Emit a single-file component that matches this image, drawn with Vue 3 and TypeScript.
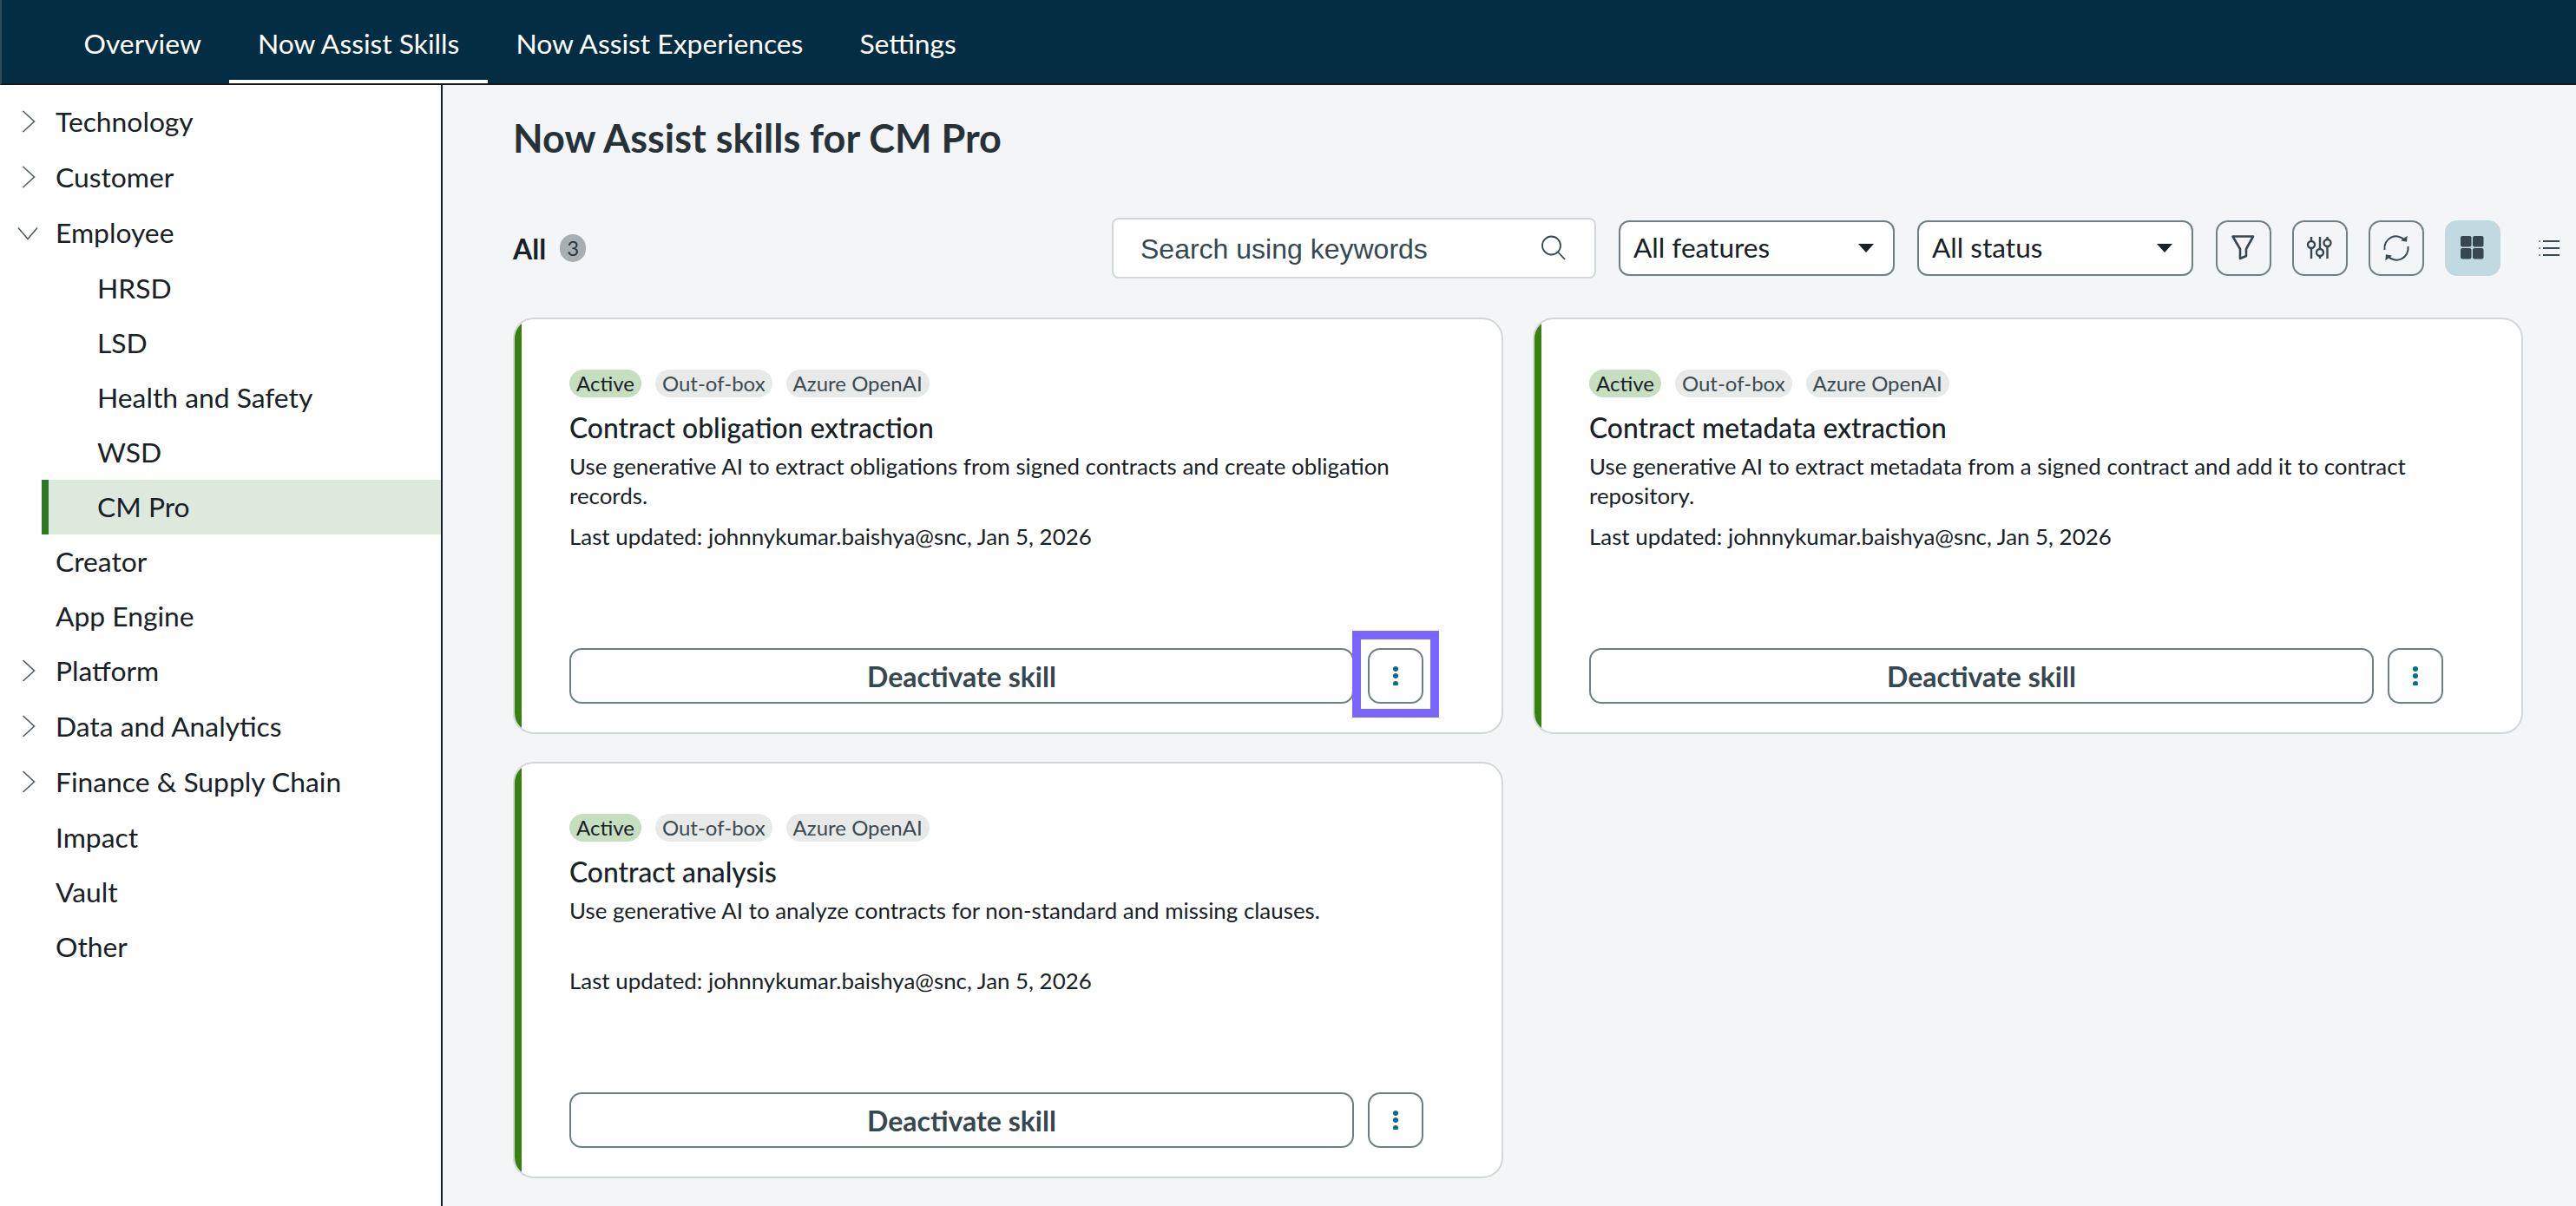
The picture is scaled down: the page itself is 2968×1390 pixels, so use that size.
<script setup lang="ts">
interface NavItem {
  label: string;
  chevron?: 'right' | 'down';
  sub?: boolean;
  active?: boolean;
}

interface Skill {
  title: string;
  desc: string;
  focused?: boolean;
}

const tabs = ['Overview', 'Now Assist Skills', 'Now Assist Experiences', 'Settings'];

const navItems: NavItem[] = [
  { label: 'Technology', chevron: 'right' },
  { label: 'Customer', chevron: 'right' },
  { label: 'Employee', chevron: 'down' },
  { label: 'HRSD', sub: true },
  { label: 'LSD', sub: true },
  { label: 'Health and Safety', sub: true },
  { label: 'WSD', sub: true },
  { label: 'CM Pro', sub: true, active: true },
  { label: 'Creator' },
  { label: 'App Engine' },
  { label: 'Platform', chevron: 'right' },
  { label: 'Data and Analytics', chevron: 'right' },
  { label: 'Finance & Supply Chain', chevron: 'right' },
  { label: 'Impact' },
  { label: 'Vault' },
  { label: 'Other' },
];

const skills: Skill[] = [
  {
    title: 'Contract obligation extraction',
    desc: 'Use generative AI to extract obligations from signed contracts and create obligation records.',
    focused: true,
  },
  {
    title: 'Contract metadata extraction',
    desc: 'Use generative AI to extract metadata from a signed contract and add it to contract repository.',
  },
  {
    title: 'Contract analysis',
    desc: 'Use generative AI to analyze contracts for non-standard and missing clauses.',
  },
];
</script>

<template>
  <div class="page">
    <header class="topbar">
      <div
        v-for="(tab, i) in tabs"
        :key="tab"
        class="tab"
        :class="{ 'tab-active': i === 1 }"
      >
        {{ tab }}
      </div>
    </header>

    <div class="layout">
      <aside class="sidebar">
        <div
          v-for="item in navItems"
          :key="item.label"
          class="nav-row"
          :class="{ 'nav-sub': item.sub, 'nav-active': item.active, 'nav-tall': item.chevron }"
        >
          <span v-if="!item.sub" class="nav-icon">
            <svg v-if="item.chevron === 'right'" width="24" height="26" viewBox="0 0 24 26" fill="none" stroke="#4f5d63" stroke-width="1.6">
              <path d="M6.5 1 L19.5 13 L6.5 25" />
            </svg>
            <svg v-else-if="item.chevron === 'down'" width="24" height="26" viewBox="0 0 24 26" fill="none" stroke="#4f5d63" stroke-width="1.6">
              <path d="M1 7.5 L12 20.5 L23 7.5" />
            </svg>
          </span>
          <span>{{ item.label }}</span>
        </div>
      </aside>

      <main class="content">
        <h1 class="page-title">Now Assist skills for CM Pro</h1>

        <div class="toolbar">
          <div class="all-label">
            <span class="all-text">All</span>
            <span class="all-count">3</span>
          </div>

          <div class="search">
            <span class="search-text">Search using keywords</span>
            <svg width="30" height="30" viewBox="0 0 30 30" fill="none" stroke="#37474f" stroke-width="1.8">
              <circle cx="12.5" cy="12" r="10.5" />
              <path d="M20 19.5 L28 28" />
            </svg>
          </div>

          <div class="dropdown">
            <span class="dropdown-text">All features</span>
            <i class="caret"></i>
          </div>
          <div class="dropdown">
            <span class="dropdown-text">All status</span>
            <i class="caret"></i>
          </div>

          <button class="icon-btn">
            <svg width="64" height="64" viewBox="0 0 64 64" fill="none" stroke="#37474f" stroke-width="2.6" stroke-linejoin="round">
              <path d="M19.5 18.5 H43 L35 33 V41 L28 44 V33 Z" />
            </svg>
          </button>
          <button class="icon-btn">
            <svg width="64" height="64" viewBox="0 0 64 64" fill="none" stroke="#37474f" stroke-width="2.4">
              <path d="M22 19 V24 M22 32 V44 M32 19 V33 M32 41 V44 M40.5 19 V22 M40.5 30 V44" />
              <circle cx="22" cy="28" r="4" />
              <circle cx="32" cy="37" r="4" />
              <circle cx="40.5" cy="26" r="4" />
            </svg>
          </button>
          <button class="icon-btn">
            <svg width="64" height="64" viewBox="0 0 64 64" fill="none" stroke="#37474f" stroke-width="2">
              <path d="M18.5 34 A13.5 13.5 0 0 1 42 23" />
              <path d="M45.5 30 A13.5 13.5 0 0 1 22 41" />
              <path d="M44 19 L43.5 24 L38.5 23 Z" fill="#37474f" stroke-width="1.2" />
              <path d="M20 45 L20.5 40 L25.5 41 Z" fill="#37474f" stroke-width="1.2" />
            </svg>
          </button>
          <button class="icon-btn icon-btn-on">
            <svg width="64" height="64" viewBox="0 0 64 64" fill="#37474f">
              <rect x="18" y="18" width="12.5" height="12.5" rx="2" />
              <rect x="32" y="18" width="12.5" height="12.5" rx="2" />
              <rect x="18" y="32" width="12.5" height="12.5" rx="2" />
              <rect x="32" y="32" width="12.5" height="12.5" rx="2" />
            </svg>
          </button>
          <span class="list-icon">
            <svg width="24" height="18" viewBox="0 0 24 18" fill="none" stroke="#37474f" stroke-width="2">
              <path d="M5 1 H24 M5 9 H24 M5 17 H24" />
              <path d="M0 1 H2 M0 9 H2 M0 17 H2" stroke="#8a979b" />
            </svg>
          </span>
        </div>

        <div class="card-grid">
          <article v-for="skill in skills" :key="skill.title" class="card">
            <div class="card-bar"></div>
            <div class="card-body">
              <div class="tags">
                <span class="tag tag-green">Active</span>
                <span class="tag">Out-of-box</span>
                <span class="tag">Azure OpenAI</span>
              </div>
              <h2 class="card-title">{{ skill.title }}</h2>
              <p class="card-desc">{{ skill.desc }}</p>
              <p class="card-meta">Last updated: johnnykumar.baishya@snc, Jan 5, 2026</p>
              <div class="card-actions">
                <button class="deactivate">Deactivate skill</button>
                <button class="more">
                  <svg width="6" height="22" viewBox="0 0 6 22" fill="#066e8c">
                    <circle cx="3" cy="3" r="3" />
                    <circle cx="3" cy="11" r="3" />
                    <circle cx="3" cy="20" r="3" />
                  </svg>
                  <span v-if="skill.focused" class="focus-box"></span>
                </button>
              </div>
            </div>
          </article>
        </div>
      </main>
    </div>
  </div>
</template>

<style>
html,
body {
  margin: 0;
  background: #f4f5f7;
}
</style>

<style scoped>
.page {
  width: 2968px;
  height: 1390px;
  overflow: hidden;
  display: flex;
  flex-direction: column;
  font-family: Lato, "Liberation Sans", sans-serif;
  color: #172126;
  background: #f4f5f7;
}

.topbar {
  height: 96px;
  flex-shrink: 0;
  display: flex;
  padding-left: 62px;
  background: #032d42;
  border-left: 2px solid #2d4c5c;
  border-bottom: 2px solid #14181c;
}

.tab {
  padding: 0 32.5px;
  line-height: 100px;
  font-size: 31.8px;
  color: #fff;
  box-sizing: border-box;
  height: 96px;
}

.tab-active {
  border-bottom: 4px solid #fff;
}

.layout {
  flex: 1;
  display: flex;
  min-height: 0;
}

.sidebar {
  width: 508px;
  flex-shrink: 0;
  padding-top: 11px;
  background: #fff;
  border-right: 2px solid #14202a;
}

.nav-row {
  height: 63px;
  box-sizing: border-box;
  display: flex;
  align-items: center;
  padding-left: 20px;
  padding-bottom: 2px;
  font-size: 31.8px;
}

.nav-tall {
  height: 64px;
}

.nav-icon {
  width: 24px;
  height: 26px;
  margin-right: 20px;
}

.nav-icon svg {
  display: block;
}

.nav-sub {
  padding-left: 112px;
}

.nav-active {
  margin-left: 48px;
  padding-left: 56px;
  background: #dee9de;
  border-left: 8px solid #2e7823;
}

.content {
  flex: 1;
  min-width: 0;
  padding-left: 81px;
}

.page-title {
  margin: 0;
  padding-top: 33px;
  height: 117px;
  box-sizing: border-box;
  font-size: 45px;
  line-height: 56px;
  font-weight: 700;
  color: #263238;
}

.toolbar {
  height: 70px;
  display: flex;
  align-items: center;
  margin-top: 36px;
  margin-bottom: 45px;
}

.all-label {
  display: flex;
  align-items: center;
  gap: 16px;
  width: 690px;
}

.all-text {
  font-size: 32px;
  font-weight: 700;
  color: #172126;
}

.all-count {
  width: 30px;
  height: 32px;
  border-radius: 15px;
  background: #a8afb2;
  text-align: center;
  font-size: 24px;
  line-height: 32px;
  color: #2b383e;
}

.search {
  width: 558px;
  height: 70px;
  box-sizing: border-box;
  display: flex;
  align-items: center;
  justify-content: space-between;
  padding: 0 32px 0 31px;
  margin-right: 26px;
  background: #fff;
  border: 2px solid #d2d8da;
  border-radius: 8px;
  font-family: "Liberation Sans", Arial, sans-serif;
  font-size: 32px;
  color: #37474f;
}

.search-text {
  padding-top: 2px;
}

.dropdown {
  width: 318px;
  height: 64px;
  box-sizing: border-box;
  display: flex;
  align-items: center;
  justify-content: space-between;
  padding: 0 22px 0 15px;
  margin-right: 26px;
  background: #fff;
  border: 2px solid #707f84;
  border-radius: 12px;
  font-size: 31.6px;
}

.dropdown-text {
  padding-bottom: 2px;
}

.caret {
  width: 0;
  height: 0;
  border-left: 9px solid transparent;
  border-right: 9px solid transparent;
  border-top: 10px solid #172126;
}

.icon-btn {
  width: 64px;
  height: 64px;
  padding: 0;
  margin-right: 24px;
  box-sizing: border-box;
  background: transparent;
  border: 2px solid #707f84;
  border-radius: 14px;
  display: flex;
  align-items: center;
  justify-content: center;
}

.icon-btn svg {
  flex-shrink: 0;
}

.icon-btn-on {
  background: #c1d9e0;
  border-color: #c1d9e0;
  margin-right: 44px;
}

.list-icon {
  display: flex;
}

.card-grid {
  display: grid;
  grid-template-columns: 1141px 1141px;
  column-gap: 34px;
  row-gap: 32px;
}

.card {
  height: 480px;
  box-sizing: border-box;
  display: flex;
  overflow: hidden;
  background: #fff;
  border: 2px solid #d2d8da;
  border-radius: 24px;
}

.card-bar {
  width: 8px;
  flex-shrink: 0;
  background: #37820f;
}

.card-body {
  flex: 1;
  display: flex;
  flex-direction: column;
  min-width: 0;
  padding: 58px 90px 33px 55px;
}

.tags {
  display: flex;
  gap: 16px;
}

.tag {
  height: 32px;
  padding: 0 8px;
  border-radius: 16px;
  background: #e8eaea;
  font-size: 24px;
  line-height: 31px;
  color: #3c4a50;
}

.tag-green {
  background: #c7dfc1;
  color: #172126;
}

.card-title {
  margin: 15px 0 0;
  font-size: 31.8px;
  line-height: 40px;
  font-weight: 500;
  color: #172126;
}

.card-desc {
  margin: 8px 0 0;
  min-height: 67px;
  font-size: 25.9px;
  line-height: 33.5px;
}

.card-meta {
  margin: 13px 0 0;
  font-size: 25.9px;
  line-height: 34px;
}

.card-actions {
  margin-top: auto;
  display: flex;
  gap: 16px;
}

.deactivate {
  flex: 1;
  height: 64px;
  box-sizing: border-box;
  background: #fff;
  border: 2px solid #707f84;
  border-radius: 14px;
  font-family: inherit;
  font-size: 32px;
  font-weight: 700;
  color: #37474f;
}

.more {
  position: relative;
  width: 64px;
  height: 64px;
  padding: 0;
  box-sizing: border-box;
  background: #fff;
  border: 2px solid #707f84;
  border-radius: 14px;
  display: flex;
  align-items: center;
  justify-content: center;
}

.focus-box {
  position: absolute;
  top: -22px;
  bottom: -18px;
  left: -20px;
  right: -20px;
  border: 10px solid #7a66ff;
}
</style>
